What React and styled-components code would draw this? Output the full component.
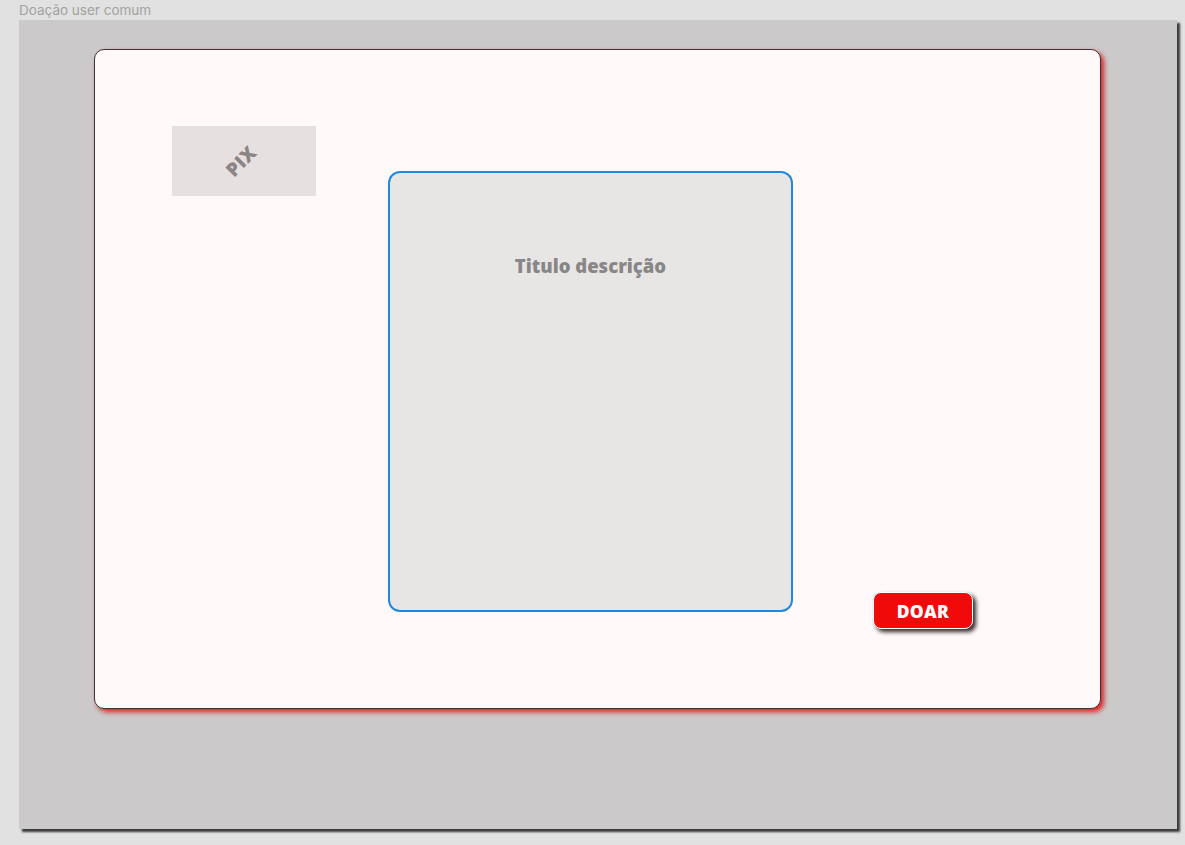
import React from 'react'
import styled, { createGlobalStyle } from 'styled-components'

const Global = createGlobalStyle`
  html, body {
    margin: 0;
    padding: 0;
    background: #e1e1e1;
  }
  body {
    font-family: Inter, "Open Sans", Arial, sans-serif;
  }
`;

const Page = styled.div`
  width: 1185px;
  height: 845px;
  background: #e1e1e1;
  overflow: hidden;
`;

const Label = styled.div`
  height: 20px;
  padding-left: 19px;
  font-family: Inter, "Liberation Sans", sans-serif;
  font-size: 13.5px;
  line-height: 20px;
  color: #a2a2a2;
`;

const Frame = styled.div`
  margin-left: 19px;
  width: 1158px;
  height: 809px;
  box-sizing: border-box;
  padding: 29px 0 0 75px;
  background: #cbc9ca;
  box-shadow: 3px 3px 2px #3a3a3a;
`;

const Card = styled.div`
  width: 1007px;
  height: 660px;
  box-sizing: border-box;
  display: flex;
  align-items: flex-start;
  padding-left: 77px;
  background: #fffaf9;
  border: 1px solid #3b3535;
  border-radius: 10px;
  box-shadow: 3px 3px 5px #e02020;
`;

const PixBox = styled.div`
  margin-top: 76px;
  width: 144px;
  height: 70px;
  display: flex;
  align-items: center;
  justify-content: center;
  background: #e6e0e0;
`;

const PixText = styled.span`
  margin-right: 6px;
  transform: rotate(-45deg);
  font-family: "Open Sans", sans-serif;
  font-weight: 800;
  font-size: 19px;
  color: #8b8585;
  letter-spacing: 0.5px;
`;

const Description = styled.div`
  margin: 121px 0 0 72px;
  width: 405px;
  height: 441px;
  box-sizing: border-box;
  border: 2px solid #1f88e0;
  border-radius: 12px;
  background: #e8e6e5;
  display: flex;
  flex-direction: column;
  align-items: center;
  padding-top: 81px;
`;

const Title = styled.h2`
  margin: 0;
  font-family: "Open Sans", sans-serif;
  font-weight: 800;
  font-size: 18.5px;
  line-height: 24px;
  color: #898687;
  letter-spacing: 0;
`;

const DonateButton = styled.button`
  margin: 542px 0 0 80px;
  width: 100px;
  height: 37px;
  border: 1px solid #ffffff;
  border-radius: 8px;
  background: #f00a0a;
  color: #ffffff;
  font-family: "Open Sans", sans-serif;
  font-weight: 800;
  font-size: 17.5px;
  letter-spacing: 0.3px;
  box-shadow: 3px 3px 4px #2e2e2e;
  cursor: pointer;
`;

const App = () => {
  return (
    <Page>
      <Global />
      <Label>Doação user comum</Label>
      <Frame>
        <Card>
          <PixBox>
            <PixText>PIX</PixText>
          </PixBox>
          <Description>
            <Title>Titulo descrição</Title>
          </Description>
          <DonateButton>DOAR</DonateButton>
        </Card>
      </Frame>
    </Page>
  )
}

export default App
